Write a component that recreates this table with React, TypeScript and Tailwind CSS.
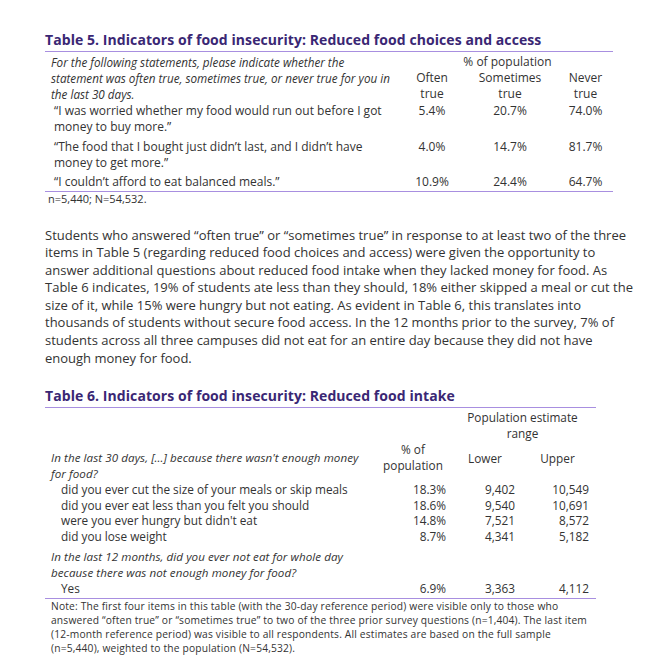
import React from "react";

const para = [
  "Students who answered “often true” or “sometimes true” in response to at least two of the three",
  "items in Table 5 (regarding reduced food choices and access) were given the opportunity to",
  "answer additional questions about reduced food intake when they lacked money for food. As",
  "Table 6 indicates, 19% of students ate less than they should, 18% either skipped a meal or cut the",
  "size of it, while 15% were hungry but not eating. As evident in Table 6, this translates into",
  "thousands of students without secure food access. In the 12 months prior to the survey, 7% of",
  "students across all three campuses did not eat for an entire day because they did not have",
  "enough money for food.",
];

const t6rows: { label: string; pct: string; lo: string; hi: string }[] = [
  { label: "did you ever cut the size of your meals or skip meals", pct: "18.3%", lo: "9,402", hi: "10,549" },
  { label: "did you ever eat less than you felt you should", pct: "18.6%", lo: "9,540", hi: "10,691" },
  { label: "were you ever hungry but didn't eat", pct: "14.8%", lo: "7,521", hi: "8,572" },
  { label: "did you lose weight", pct: "8.7%", lo: "4,341", hi: "5,182" },
];

export default function App() {
  return (
    <div className="w-[672px] h-[672px] overflow-hidden bg-white text-[#333] font-['Open_Sans',sans-serif] pl-[45px] pt-[30px]">
      {/* Table 5 */}
      <div className="w-[568px] border-b-[1.5px] border-[#a88fe0] pb-[1px] text-[14px] font-bold leading-[20px] text-[#3a2774] whitespace-nowrap tracking-[0.07px]">
        Table 5. Indicators of food insecurity: Reduced food choices and access
      </div>
      <div className="w-[568px] border-b-[1.5px] border-[#a88fe0] pb-[1px] pl-[6px] mt-[1.5px] text-[12px] leading-[16px]">
        <div className="grid grid-cols-[351px_60px_96px_55px]">
          <div className="row-span-3 row-start-1 col-start-1 italic whitespace-nowrap text-[11.7px]">
            For the following statements, please indicate whether the
            <br />
            statement was often true, sometimes true, or never true for you in
            <br />
            the last 30 days.
          </div>
          <div className="row-start-1 col-start-2 col-span-3 text-center">% of population</div>
          <div className="row-start-2 row-span-2 col-start-2 text-center">
            Often
            <br />
            true
          </div>
          <div className="row-start-2 row-span-2 col-start-3 text-center">
            Sometimes
            <br />
            true
          </div>
          <div className="row-start-2 row-span-2 col-start-4 text-center">
            Never
            <br />
            true
          </div>
        </div>
        <div className="grid grid-cols-[351px_60px_96px_55px] mt-[1px]">
          <div className="pl-[3px] whitespace-nowrap">
            “I was worried whether my food would run out before I got
            <br />
            money to buy more.”
          </div>
          <div className="text-center">5.4%</div>
          <div className="text-center">20.7%</div>
          <div className="text-center">74.0%</div>
        </div>
        <div className="grid grid-cols-[351px_60px_96px_55px] mt-[4px]">
          <div className="pl-[3px] whitespace-nowrap">
            “The food that I bought just didn’t last, and I didn’t have
            <br />
            money to get more.”
          </div>
          <div className="text-center">4.0%</div>
          <div className="text-center">14.7%</div>
          <div className="text-center">81.7%</div>
        </div>
        <div className="grid grid-cols-[351px_60px_96px_55px] mt-[3px]">
          <div className="pl-[3px] whitespace-nowrap">“I couldn’t afford to eat balanced meals.”</div>
          <div className="text-center">10.9%</div>
          <div className="text-center">24.4%</div>
          <div className="text-center">64.7%</div>
        </div>
      </div>
      <div className="pl-[3px] text-[11px] leading-[14px]">n=5,440; N=54,532.</div>

      {/* Paragraph */}
      <div className="mt-[21px] text-[13px] leading-[17.6px] whitespace-nowrap">
        {para.map((l, i) => (
          <div key={i}>{l}</div>
        ))}
      </div>

      {/* Table 6 */}
      <div className="mt-[19px] w-[551px] border-b-[1.5px] border-[#a88fe0] pb-[1px] text-[14px] font-bold leading-[20px] text-[#3a2774] whitespace-nowrap tracking-[0.07px]">
        Table 6. Indicators of food insecurity: Reduced food intake
      </div>
      <div className="w-[551px] border-b-[1.5px] border-[#a88fe0] pb-[1px] pl-[6px] text-[11.8px]">
        <div className="grid grid-cols-[325px_74px_70px_75px] mt-[1px] leading-[16px]">
          <div className="col-start-3 col-span-2 text-center">
            Population estimate
            <br />
            range
          </div>
        </div>
        <div className="grid grid-cols-[325px_74px_70px_75px] items-start">
          <div className="pt-[9px] italic leading-[15.5px] whitespace-nowrap text-[11.6px] tracking-[0.07px]">
            In the last 30 days, [...] because there wasn't enough money
            <br />
            for food?
          </div>
          <div className="text-center leading-[16px]">
            % of
            <br />
            population
          </div>
          <div className="pt-[9px] text-center leading-[16px]">Lower</div>
          <div className="pt-[9px] text-center leading-[16px]">Upper</div>
        </div>
        <div className="mt-[1px] leading-[15.5px]">
          {t6rows.map((r, i) => (
            <div key={i} className="grid grid-cols-[325px_74px_70px_75px]">
              <div className="pl-[10px] whitespace-nowrap">{r.label}</div>
              <div className="text-right pr-[4px]">{r.pct}</div>
              <div className="text-right pr-[5px]">{r.lo}</div>
              <div className="text-right pr-[6px]">{r.hi}</div>
            </div>
          ))}
          <div className="mt-[5px] italic whitespace-nowrap text-[11.6px] tracking-[0.07px]">
            In the last 12 months, did you ever not eat for whole day
            <br />
            because there was not enough money for food?
          </div>
          <div className="grid grid-cols-[325px_74px_70px_75px] mt-[1px]">
            <div className="pl-[10px]">Yes</div>
            <div className="text-right pr-[4px]">6.9%</div>
            <div className="text-right pr-[5px]">3,363</div>
            <div className="text-right pr-[6px]">4,112</div>
          </div>
        </div>
      </div>
      <div className="pl-[6px] text-[10.25px] leading-[14px] whitespace-nowrap tracking-[0.17px]">
        <div>Note: The first four items in this table (with the 30-day reference period) were visible only to those who</div>
        <div>answered “often true” or “sometimes true” to two of the three prior survey questions (n=1,404). The last item</div>
        <div>(12-month reference period) was visible to all respondents. All estimates are based on the full sample</div>
        <div>(n=5,440), weighted to the population (N=54,532).</div>
      </div>
    </div>
  );
}
